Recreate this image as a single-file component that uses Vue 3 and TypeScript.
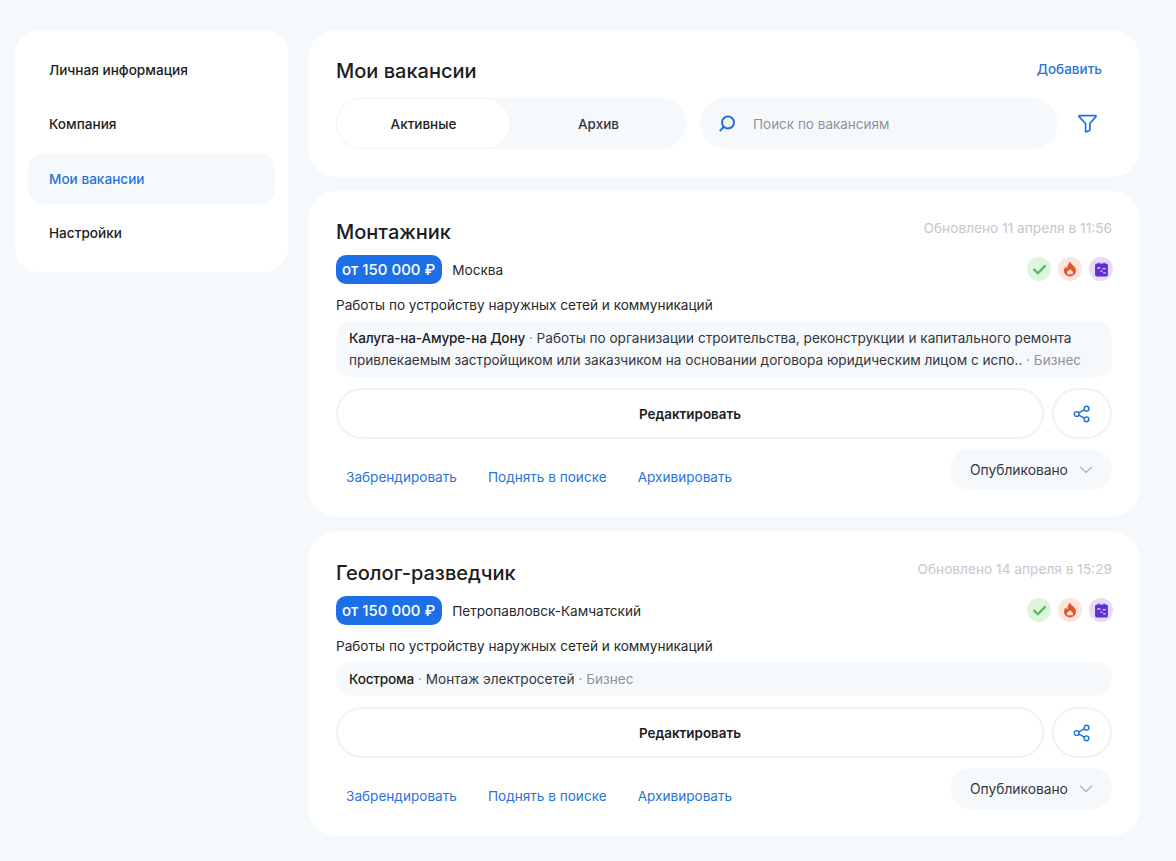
<template>
  <div class="page">
    <aside class="side">
      <a v-for="item in menu" :key="item" class="side-item" :class="{ active: item === 'Мои вакансии' }">{{ item }}</a>
    </aside>
    <main class="content">
      <section class="card head">
        <div class="head-top">
          <h1>Мои вакансии</h1>
          <a class="add">Добавить</a>
        </div>
        <div class="head-tools">
          <div class="tabs">
            <div class="tab on">Активные</div>
            <div class="tab">Архив</div>
          </div>
          <div class="search">
            <svg width="20" height="20" viewBox="0 0 20 20" fill="none" stroke="#1d6fe0" stroke-width="2" stroke-linecap="round">
              <circle cx="11" cy="8.5" r="6" />
              <path d="M6.6 13 3.4 16.4" />
            </svg>
            <span>Поиск по вакансиям</span>
          </div>
          <svg class="filter" width="19" height="19" viewBox="0 0 20 20" fill="none" stroke="#1d6fe0" stroke-width="1.8" stroke-linejoin="round">
            <path d="M1.5 1.8h17c.5 0 .7.5.4.9L12.5 10v6.6c0 .4-.2.6-.5.8l-3.1 1.3c-.5.2-.9-.1-.9-.6V10L1.100 2.700c-.3-.4-.1-.9.4-.9Z" />
          </svg>
        </div>
      </section>

      <section v-for="job in jobs" :key="job.title" class="card job">
        <div class="job-top">
          <h2>{{ job.title }}</h2>
          <span class="updated">{{ job.updated }}</span>
        </div>
        <div class="job-meta">
          <span class="salary">от 150 000 ₽</span>
          <span class="city">{{ job.city }}</span>
          <div class="badges">
            <span class="badge green">
              <svg width="15" height="15" viewBox="0 0 14 14" fill="none" stroke="#5cb868" stroke-width="2.200" stroke-linecap="round" stroke-linejoin="round"><path d="M2 7.200 5.500 10.500 12 3.800" /></svg>
            </span>
            <span class="badge red">
              <svg width="16" height="16" viewBox="0 0 14 14"><path fill="#e2562c" d="M7 .5c.4 2 3.900 3.700 5 6.300 1.100 3.500-1.500 6.700-5 6.700S.9 10.300 2 7c.3-1 1-1.900 1.600-2.400.1 1 .5 1.700 1.100 2C4.600 4.500 5.500 2 7 .5Z" /><path fill="#fde4dc" d="M7 7.300 9.500 9.500v2.200H4.500V9.500Z" /></svg>
            </span>
            <span class="badge violet">
              <svg width="15" height="15" viewBox="0 0 14 14"><path fill="#5f2fd0" d="M2.500 1.500h1.500V.5h1.200v1h3.600v-1H10v1h1.500A1.500 1.500 0 0 1 13 3v9a1.500 1.500 0 0 1-1.500 1.500h-9A1.500 1.500 0 0 1 1 12V3a1.500 1.500 0 0 1 1.500-1.500Z" /><path fill="#d9c9f7" d="M3 5h3v1.200H3zM8 5.500h3v1.200H8zM6 8h2v1.200H6zM8.500 9.500H11v1.200H8.500z" /></svg>
            </span>
          </div>
        </div>
        <p class="desc">Работы по устройству наружных сетей и коммуникаций</p>
        <div class="note">
          <b>{{ job.place }}</b><span class="dot"> · </span>{{ job.text }}<span class="biz"> · Бизнес</span>
        </div>
        <div class="actions">
          <button class="edit">Редактировать</button>
          <button class="share">
            <svg width="18" height="18" viewBox="0 0 18 18" fill="none" stroke="#1d6fe0" stroke-width="1.400">
              <circle cx="13.500" cy="3.700" r="2.400" />
              <circle cx="3.700" cy="9" r="2.400" />
              <circle cx="13.500" cy="14.300" r="2.400" />
              <path d="M5.800 7.800 11.400 4.900M5.800 10.200l5.600 2.900" />
            </svg>
          </button>
        </div>
        <div class="job-bottom">
          <div class="links">
            <a>Забрендировать</a>
            <a>Поднять в поиске</a>
            <a>Архивировать</a>
          </div>
          <div class="status">
            Опубликовано
            <svg width="14" height="8" viewBox="0 0 14 8" fill="none" stroke="#b4b9c0" stroke-width="1.500" stroke-linecap="round" stroke-linejoin="round"><path d="M1.500 1.200 7 6.500l5.500-5.300" /></svg>
          </div>
        </div>
      </section>
    </main>
  </div>
</template>

<script setup lang="ts">
interface Job {
  title: string
  updated: string
  city: string
  place: string
  text: string
}

const menu = ['Личная информация', 'Компания', 'Мои вакансии', 'Настройки']

const jobs: Job[] = [
  {
    title: 'Монтажник',
    updated: 'Обновлено 11 апреля в 11:56',
    city: 'Москва',
    place: 'Калуга-на-Амуре-на Дону',
    text: 'Работы по организации строительства, реконструкции и капитального ремонта привлекаемым застройщиком или заказчиком на основании договора юридическим лицом с испо..'
  },
  {
    title: 'Геолог-разведчик',
    updated: 'Обновлено 14 апреля в 15:29',
    city: 'Петропавловск-Камчатский',
    place: 'Кострома',
    text: 'Монтаж электросетей'
  }
]
</script>

<style>
body {
  background: #f6f9fb;
}
</style>

<style scoped>
.page {
  display: flex;
  align-items: flex-start;
  gap: 20px;
  width: 1176px;
  height: 861px;
  box-sizing: border-box;
  padding: 30px 36px 0 15px;
  overflow: hidden;
  background: #f6f9fb;
  font-family: Inter, "Noto Sans", sans-serif;
  color: #1b1d21;
}

.side {
  width: 273px;
  height: 242px;
  box-sizing: border-box;
  flex-shrink: 0;
  padding: 14px 13px 0;
  background: #fff;
  border-radius: 24px;
  display: flex;
  flex-direction: column;
  gap: 3.500px;
}

.side-item {
  height: 51px;
  display: flex;
  align-items: center;
  padding-left: 21px;
  border-radius: 16px;
  font-size: 13.600px;
  font-weight: 500;
}

.side-item.active {
  background: #f6f9fb;
  color: #2a73d9;
}

.content {
  flex: 1;
  display: flex;
  flex-direction: column;
  gap: 14px;
}

.card {
  background: #fff;
  border-radius: 28px;
  padding: 0 28px;
}

.head {
  height: 147px;
  box-sizing: border-box;
  padding-top: 28px;
}

.head-top {
  display: flex;
  justify-content: space-between;
  align-items: flex-start;
  padding-right: 10px;
  height: 27px;
}

h1 {
  margin: 0;
  font-size: 20px;
  line-height: 27px;
  font-weight: 500;
}

.add {
  font-size: 13.500px;
  line-height: 22px;
  font-weight: 500;
  color: #2a73d9;
}

.head-tools {
  display: flex;
  align-items: center;
  margin-top: 13px;
  height: 51px;
}

.tabs {
  width: 350px;
  height: 51px;
  flex-shrink: 0;
  display: flex;
  border-radius: 26px;
  background: #f6f9fb;
}

.tab {
  width: 175px;
  display: flex;
  align-items: center;
  justify-content: center;
  border-radius: 26px;
  font-size: 13.500px;
  font-weight: 500;
  color: #33363b;
}

.tab.on {
  background: #fff;
  border: 1px solid #f1f3f6;
  box-sizing: border-box;
  color: #1b1d21;
}

.search {
  width: 358px;
  height: 51px;
  margin-left: 14px;
  box-sizing: border-box;
  padding-left: 17px;
  display: flex;
  align-items: center;
  gap: 16px;
  border-radius: 26px;
  background: #f6f9fb;
  font-size: 13.500px;
  color: #8d9299;
}

.filter {
  margin-left: 20px;
}

.job {
  padding-top: 26px;
  padding-bottom: 27px;
}

.job:last-child {
  padding-top: 27px;
}

.job-top {
  display: flex;
  justify-content: space-between;
  align-items: flex-start;
}

h2 {
  margin: 0;
  font-size: 20px;
  line-height: 30px;
  font-weight: 500;
}

.updated {
  margin-top: 3px;
  font-size: 13.700px;
  color: #c5c8cd;
}

.job-meta {
  display: flex;
  align-items: center;
  margin-top: 8px;
  height: 29px;
}

.salary {
  height: 29px;
  box-sizing: border-box;
  padding: 0 7px 0 6px;
  display: flex;
  align-items: center;
  border-radius: 10px;
  background: #1d6fe8;
  color: #fff;
  font-size: 15px;
  font-weight: 500;
}

.city {
  margin-left: 10px;
  font-size: 13.600px;
  color: #26282c;
}

.badges {
  margin: -1px -1px 0 auto;
  display: flex;
  gap: 7px;
}

.badge {
  width: 24px;
  height: 24px;
  display: flex;
  align-items: center;
  justify-content: center;
  border-radius: 50%;
}

.green { background: #def5dc; }
.red { background: #fde4dc; }
.violet { background: #e6dcf8; }

.desc {
  margin: 10px 0 0;
  font-size: 13.600px;
  line-height: 22px;
  color: #26282c;
}

.note {
  margin-top: 5px;
  padding: 6px 13px;
  background: #f6f9fb;
  border-radius: 16px;
  font-size: 13.600px;
  line-height: 22px;
  color: #33363b;
}

.note b {
  font-weight: 500;
  letter-spacing: -0.180px;
  color: #1b1d21;
}

.dot,
.biz {
  color: #8d9299;
}

.actions {
  display: flex;
  gap: 8px;
  margin-top: 11px;
}

button {
  height: 51px;
  background: #fff;
  border: 2px solid #f1f2f4;
  border-radius: 26px;
  font-family: inherit;
  color: #1b1d21;
}

.edit {
  flex: 1;
  font-size: 13.400px;
  font-weight: 600;
}

.share {
  width: 60px;
  display: flex;
  align-items: center;
  justify-content: center;
}

.job-bottom {
  display: flex;
  justify-content: space-between;
  align-items: flex-start;
  margin-top: 10px;
}

.links {
  display: flex;
  gap: 31px;
  padding: 20px 0 0 10px;
  font-size: 13.600px;
  color: #2a73d9;
}

.status {
  width: 162px;
  height: 41px;
  box-sizing: border-box;
  padding: 0 19px 0 20px;
  display: flex;
  align-items: center;
  justify-content: space-between;
  border-radius: 21px;
  background: #f6f9fb;
  font-size: 13.800px;
  color: #33363b;
}
</style>
